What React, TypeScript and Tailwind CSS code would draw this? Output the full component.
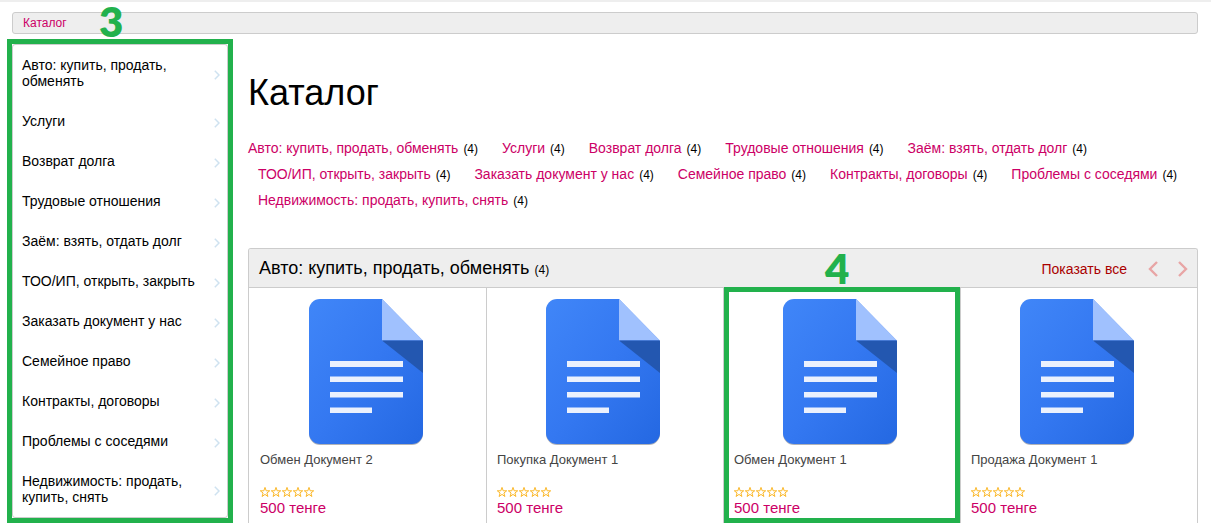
const categories = [
  'Авто: купить, продать, обменять',
  'Услуги',
  'Возврат долга',
  'Трудовые отношения',
  'Заём: взять, отдать долг',
  'ТОО/ИП, открыть, закрыть',
  'Заказать документ у нас',
  'Семейное право',
  'Контракты, договоры',
  'Проблемы с соседями',
  'Недвижимость: продать, купить, снять',
];

const products = [
  { name: 'Обмен Документ 2', price: '500 тенге' },
  { name: 'Покупка Документ 1', price: '500 тенге' },
  { name: 'Обмен Документ 1', price: '500 тенге', marker: '4' },
  { name: 'Продажа Документ 1', price: '500 тенге' },
];

function DocumentIcon() {
  return (
    <svg width="118" height="148" viewBox="0 0 118 148" className="mx-auto block" aria-hidden="true">
      <defs>
        <linearGradient id="doc-fill" x1="0" y1="0" x2="1" y2="1">
          <stop offset="0" stopColor="#4086f8" />
          <stop offset="0.5" stopColor="#3478f1" />
          <stop offset="1" stopColor="#2468e2" />
        </linearGradient>
      </defs>
      <path d="M11 2H73L114 44V136a11 11 0 0 1-11 11H11A11 11 0 0 1 0 136V13A11 11 0 0 1 11 2Z" fill="#8f9299" opacity="0.7" />
      <path d="M11 1H73L114 43V135a11 11 0 0 1-11 11H11A11 11 0 0 1 0 135V12A11 11 0 0 1 11 1Z" fill="url(#doc-fill)" />
      <path d="M73 1L114 42.5H73Z" fill="#a0c1fe" />
      <path d="M73 42.5H114V75Z" fill="#2357b0" />
      <path d="M21 63H94V69H21ZM21 78.5H94V84H21ZM21 94H94V99.5H21ZM21 109.5H63V115H21Z" fill="#ebf1fd" />
    </svg>
  );
}

function MenuArrow() {
  return (
    <svg width="6" height="10" viewBox="0 0 6 10" fill="none" stroke="#cfe2f0" strokeWidth="1.5" className="mt-1 shrink-0" aria-hidden="true">
      <path d="M0.8 0.8L5 5L0.8 9.2" />
    </svg>
  );
}

function Rating() {
  return (
    <div className="mt-4 flex h-3" role="img" aria-label="0 из 5">
      {[1, 2, 3, 4, 5].map((n) => (
        <svg key={n} width="11" height="12" viewBox="0 0 11 12" fill="none" stroke="#fbb829">
          <path d="M5 1.4L6.2 4.8H9.7L6.9 7L7.9 10.5L5 8.4L2.1 10.5L3.1 7L0.3 4.8H3.8Z" />
        </svg>
      ))}
    </div>
  );
}

export default function App() {
  return (
    <div className="min-h-screen border-t-2 border-[#eeeeee] bg-white font-['Liberation_Sans',Arial,sans-serif] text-sm text-black">
      <div className="px-3 pt-2.5 pr-[13px]">
        {/* Breadcrumbs */}
        <nav className="relative flex h-[22px] items-center rounded-[3px] border border-[#cccccc] bg-[#eeeeee] px-2.5 text-xs">
          <a href="#" className="text-[#cc0066]">Каталог</a>
          <span className="absolute -top-3 left-[86px] font-['Lato',sans-serif] text-[42px] leading-10 font-extrabold text-[#22b14c]">
            3
          </span>
        </nav>

        <div className="mt-2.5 flex items-start gap-5">
          {/* Category menu */}
          <aside className="relative w-[216px] shrink-0 rounded-[3px] border border-[#cccccc]">
            <ul>
              {categories.map((name) => (
                <li key={name}>
                  <a href="#" className="flex items-center justify-between py-3 pr-[7px] pl-[9px] leading-4">
                    <span>{name}</span>
                    <MenuArrow />
                  </a>
                </li>
              ))}
            </ul>
            <div className="pointer-events-none absolute -inset-1.5 border-5 border-[#22b14c]" />
          </aside>

          <main className="min-w-0 flex-1 pt-[29px]">
            <h1 className="text-4xl leading-10">Каталог</h1>

            <ul className="mt-[22px] flex flex-wrap gap-x-1">
              {categories.map((name) => (
                <li key={name} className="mx-2.5 leading-[26px] first:ml-0">
                  <a href="#" className="text-[#cc0066]">{name}</a>
                  <span className="ml-[5px] text-xs">(4)</span>
                </li>
              ))}
            </ul>

            {/* Product carousel */}
            <section className="mt-[35px] rounded-t-[3px] border border-b-0 border-[#cccccc]">
              <header className="flex h-[39px] items-center rounded-t-[2px] border-b border-[#cccccc] bg-[#eeeeee] pl-2.5">
                <h2 className="text-lg leading-6">
                  Авто: купить, продать, обменять <span className="text-xs">(4)</span>
                </h2>
                <a href="#" className="mt-0.5 ml-auto text-[#aa0000]">Показать все</a>
                <button type="button" aria-label="Назад" className="mt-0.5 ml-3 flex size-7 items-center justify-center">
                  <svg width="10" height="16" viewBox="0 0 10 16" fill="none" stroke="#e8a5a5" strokeWidth="2.4">
                    <path d="M9 1L2 8L9 15" />
                  </svg>
                </button>
                <button type="button" aria-label="Вперёд" className="mt-0.5 ml-0.5 flex size-7 items-center justify-center">
                  <svg width="10" height="16" viewBox="0 0 10 16" fill="none" stroke="#e8a5a5" strokeWidth="2.4">
                    <path d="M1 1L8 8L1 15" />
                  </svg>
                </button>
              </header>

              <div className="grid grid-cols-4">
                {products.map((product) => (
                  <article
                    key={product.name}
                    className="relative border-l border-[#cccccc] px-2.5 pt-2.5 pb-[5px] first:border-transparent"
                  >
                    <DocumentIcon />
                    <h3 className="mt-1 text-[13px] leading-5 text-[#444444]">{product.name}</h3>
                    <Rating />
                    <p className="text-[15px] leading-5 text-[#cc0066]">{product.price}</p>
                    {product.marker && (
                      <>
                        <div className="pointer-events-none absolute inset-x-0 -top-px bottom-0 border-5 border-[#22b14c]" />
                        <span className="absolute -top-10 left-[101px] font-['Lato',sans-serif] text-[42px] leading-10 font-extrabold text-[#22b14c]">
                          {product.marker}
                        </span>
                      </>
                    )}
                  </article>
                ))}
              </div>
            </section>
          </main>
        </div>
      </div>
    </div>
  );
}
